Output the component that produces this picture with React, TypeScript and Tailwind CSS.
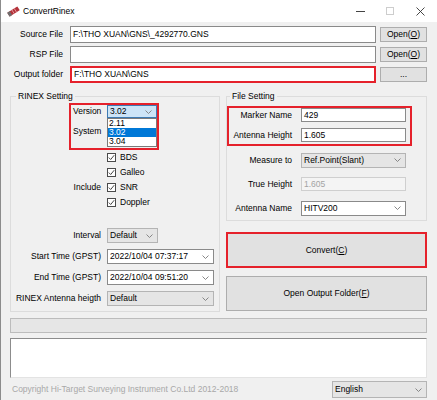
import React from "react";

const RED = "border-[#e5212b]";

function Chevron() {
  return (
    <svg width="7" height="4" viewBox="0 0 7 4" className="shrink-0">
      <polyline points="0.5,0.5 3.5,3.5 6.5,0.5" fill="none" stroke="#7a7a7a" strokeWidth="0.9" />
    </svg>
  );
}

type ComboProps = { value: string; w: string; tone: "gray" | "white" | "blue"; h?: string };

function Combo({ value, w, tone, h = "h-[15px]" }: ComboProps) {
  const tones = {
    gray: "bg-[#e5e5e5] border-[#b4b4b4]",
    white: "bg-white border-[#8a8a8a]",
    blue: "bg-[#cce4f7] border-[#3d7ab3]",
  };
  return (
    <div className={`${w} ${h} ${tones[tone]} border flex items-center justify-between pl-[2px] pr-[4px]`}>
      <span className="leading-none whitespace-nowrap">{value}</span>
      <Chevron />
    </div>
  );
}

function Field({ value, w = "w-[105px]", disabled = false }: { value: string; w?: string; disabled?: boolean }) {
  return (
    <div
      className={`${w} h-[14px] border flex items-center pl-[2px] ${
        disabled ? "bg-[#f4f4f4] border-[#cfcfcf] text-[#a3a3a3]" : "bg-white border-[#8a8a8a]"
      }`}
    >
      {value}
    </div>
  );
}

function Check({ label }: { label: string }) {
  return (
    <div className="flex items-center gap-[4px]">
      <div className="w-[9px] h-[9px] border border-[#4a4a4a] bg-white flex items-center justify-center">
        <svg width="7" height="7" viewBox="0 0 7 7">
          <polyline points="0.8,3.6 2.7,5.5 6.2,1.2" fill="none" stroke="#333" strokeWidth="0.9" />
        </svg>
      </div>
      <span>{label}</span>
    </div>
  );
}

function U({ children }: { children: React.ReactNode }) {
  return <span className="underline underline-offset-1">{children}</span>;
}

const fileRows = [
  { label: "Source File", value: "F:\\THO XUAN\\GNS\\_4292770.GNS", btn: "open" },
  { label: "RSP File", value: "", btn: "open" },
  { label: "Output folder", value: "F:\\THO XUAN\\GNS", btn: "dots" },
];

export default function App() {
  return (
    <div className="w-[437px] h-[400px] bg-[#f0f0f0] border-l border-[#8c8c8c] overflow-hidden flex flex-col text-[8.5px] text-black font-['Liberation_Sans',Arial,sans-serif]">
      {/* title bar */}
      <div className="h-[22px] bg-white flex items-center shrink-0">
        <svg className="ml-[6px]" width="13" height="11" viewBox="0 0 13 11">
          <g transform="rotate(-32 6.5 5.5)">
            <rect x="0.5" y="3.2" width="12" height="4.6" rx="0.6" fill="#b3323a" />
            <rect x="0.5" y="3.2" width="3" height="4.6" fill="#6e6e6e" />
            <line x1="6" y1="3.2" x2="6" y2="7.8" stroke="#e9a3a7" strokeWidth="0.8" />
            <line x1="8.7" y1="3.2" x2="8.7" y2="7.8" stroke="#e9a3a7" strokeWidth="0.8" />
          </g>
        </svg>
        <span className="ml-[3px] text-[8.5px]">ConvertRinex</span>
        <div className="ml-auto flex items-center h-full mr-[2px]">
          <div className="w-[30px] h-full flex items-center justify-center">
            <div className="w-[9px] h-[1px] bg-[#444]" />
          </div>
          <div className="w-[30px] h-full flex items-center justify-center">
            <div className="w-[8px] h-[8px] border border-[#cdcdcd]" />
          </div>
          <div className="w-[30px] h-full flex items-center justify-center">
            <svg width="9" height="9" viewBox="0 0 9 9">
              <path d="M0.5 0.5 L8.5 8.5 M8.5 0.5 L0.5 8.5" stroke="#333" strokeWidth="0.9" />
            </svg>
          </div>
        </div>
      </div>

      <div className="pl-[9px] pr-[10px] flex flex-col">
        {/* file rows */}
        <div className="flex flex-col gap-[3px] mt-[4px]">
          {fileRows.map((r) => (
            <div key={r.label} className="flex items-center h-[17px]">
              <div className="w-[53px] text-right whitespace-nowrap">{r.label}</div>
              <div
                className={`ml-[7px] flex-1 h-full bg-white flex items-center pl-[2px] ${
                  r.btn === "dots" ? `border-2 ${RED}` : "border border-[#8a8a8a]"
                }`}
              >
                {r.value}
              </div>
              <button
                type="button"
                className="ml-[4px] w-[47px] h-[15px] bg-[#e1e1e1] border border-[#adadad] flex items-center justify-center"
              >
                {r.btn === "open" ? (
                  <span>
                    Open(<U>O</U>)
                  </span>
                ) : (
                  <span className="leading-none">...</span>
                )}
              </button>
            </div>
          ))}
        </div>

        {/* settings */}
        <div className="flex gap-[6px] mt-[8px] items-start">
          <fieldset className="w-[210px] border border-[#dcdcdc] pb-[2px]">
            <legend className="ml-[5px] px-[2px] leading-[10px]">RINEX Setting</legend>

            <div className={`ml-[58px] mt-[2px] w-[90px] h-[47px] border-2 ${RED} flex`}>
              <div className="w-[36px] pl-[2px] flex flex-col">
                <div className="h-[13px] leading-[13px]">Version</div>
                <div className="mt-[8px] leading-[10px]">System</div>
              </div>
              <div className="w-[50px] flex flex-col">
                <Combo value="3.02" w="w-[50px]" tone="blue" h="h-[13px]" />
                <div className="h-[29px] bg-white border border-[#7a7a7a] flex flex-col">
                  <div className="h-[9px] leading-[9px] pl-[1px]">2.11</div>
                  <div className="h-[9px] leading-[9px] pl-[1px] bg-[#0078d7] text-white">3.02</div>
                  <div className="h-[9px] leading-[9px] pl-[1px]">3.04</div>
                </div>
              </div>
            </div>

            <div className="grid grid-cols-[90px_1fr] gap-x-[6px]">
              {[
                ["", "BDS"],
                ["", "Galleo"],
                ["Include", "SNR"],
                ["", "Doppler"],
              ].map(([l, c]) => (
                <React.Fragment key={c}>
                  <div className="h-[15px] flex items-center justify-end">{l}</div>
                  <div className="h-[15px] flex items-center">
                    <Check label={c} />
                  </div>
                </React.Fragment>
              ))}
            </div>

            <div className="mt-[15px] grid grid-cols-[90px_1fr] gap-x-[6px]">
              {[
                ["Interval", "Default", "w-[51px]", "gray"],
                ["Start Time (GPST)", "2022/10/04 07:37:17", "w-[107px]", "white"],
                ["End Time (GPST)", "2022/10/04 09:51:20", "w-[107px]", "white"],
                ["RINEX Antenna heigth", "Default", "w-[107px]", "gray"],
              ].map(([l, v, w, t]) => (
                <React.Fragment key={l}>
                  <div className="h-[21px] flex items-center justify-end whitespace-nowrap">{l}</div>
                  <div className="h-[21px] flex items-center">
                    <Combo value={v} w={w} tone={t as "gray" | "white"} />
                  </div>
                </React.Fragment>
              ))}
            </div>
          </fieldset>

          <div className="flex-1 flex flex-col">
            <fieldset className="border border-[#dcdcdc]">
              <legend className="ml-[3px] px-[2px] leading-[10px]">File Setting</legend>

              <div className={`mt-[5px] w-[185px] h-[40px] border-2 ${RED} flex flex-col gap-[6px]`}>
                {[
                  ["Marker Name", "429"],
                  ["Antenna Height", "1.605"],
                ].map(([l, v]) => (
                  <div key={l} className="h-[14px] flex items-center">
                    <div className="w-[63px] text-right whitespace-nowrap">{l}</div>
                    <div className="ml-[9px]">
                      <Field value={v} />
                    </div>
                  </div>
                ))}
              </div>

              <div className="mt-[2px] flex flex-col">
                <div className="h-[24px] flex items-center">
                  <div className="w-[65px] text-right">Measure to</div>
                  <div className="ml-[9px]">
                    <Combo value="Ref.Point(Slant)" w="w-[105px]" tone="gray" />
                  </div>
                </div>
                <div className="h-[24px] flex items-center">
                  <div className="w-[65px] text-right">True Height</div>
                  <div className="ml-[9px]">
                    <Field value="1.605" disabled />
                  </div>
                </div>
                <div className="h-[24px] flex items-center">
                  <div className="w-[65px] text-right whitespace-nowrap">Antenna Name</div>
                  <div className="ml-[9px]">
                    <Combo value="HITV200" w="w-[105px]" tone="white" />
                  </div>
                </div>
              </div>
            </fieldset>

            <button
              type="button"
              className={`mt-[11px] h-[36px] bg-[#e1e1e1] border-2 ${RED} flex items-center justify-center`}
            >
              <span>
                Convert(<U>C</U>)
              </span>
            </button>
            <button
              type="button"
              className="mt-[8px] h-[35px] bg-[#e1e1e1] border border-[#adadad] flex items-center justify-center"
            >
              <span>
                Open Output Folder(<U>F</U>)
              </span>
            </button>
          </div>
        </div>

        {/* progress */}
        <div className="mt-[6px] h-[15px] bg-[#e6e6e6] border border-[#bcbcbc]" />

        {/* log */}
        <div className="mt-[5px] h-[40px] bg-white border border-t-[#8c8c8c] border-l-[#8c8c8c] border-r-[#e3e3e3] border-b-[#e3e3e3]" />

        {/* footer */}
        <div className="mt-[3px] h-[17px] flex items-center justify-between">
          <span className="pl-[2px] text-[#a8a8a8]">Copyright Hi-Target Surveying Instrument Co.Ltd 2012-2018</span>
          <Combo value="English" w="w-[95px]" tone="gray" h="h-[17px]" />
        </div>
      </div>
    </div>
  );
}
